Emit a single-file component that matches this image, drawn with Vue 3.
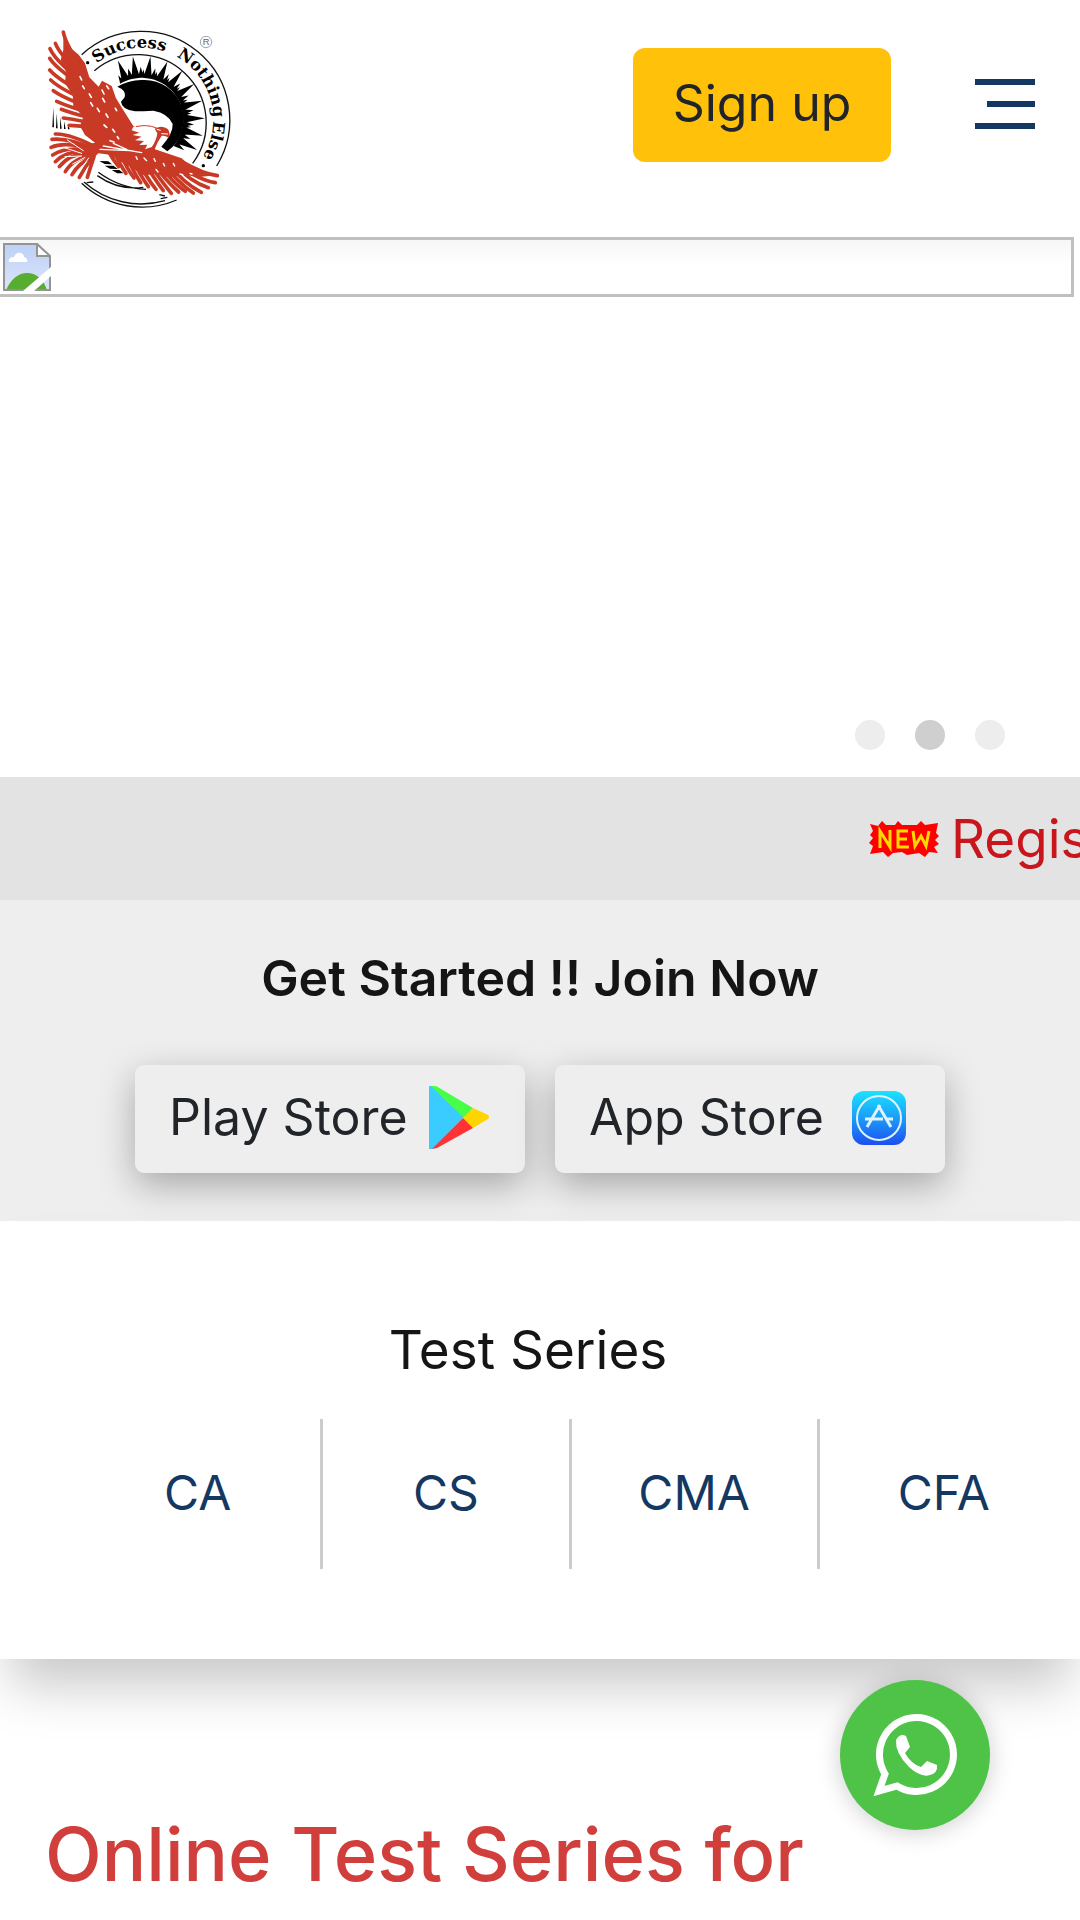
<script setup>
const series = ['CA', 'CS', 'CMA', 'CFA']

const point = (radius, degrees) => {
  const a = (degrees * Math.PI) / 180
  return `${(335 + radius * Math.cos(a)).toFixed(1)} ${(298 + radius * Math.sin(a)).toFixed(1)}`
}
const ray = (angle, tip, half) =>
  `M${point(125, angle - half)}L${point(tip, angle)}L${point(125, angle + half)}Z`
const rays = [-112, -98, -82, -66, -50, -34, -17, -1, 15, 29]
  .map((a) => ray(a, 190, 6) + ray(a + 7, 158, 4) + ray(a - 6, 150, 3))
  .join('')

const feathers = [
  // upper wing
  'M100 36Q106 72 165 160', 'M76 70Q92 110 175 185', 'M60 86Q80 130 180 200', 'M59 115Q85 155 190 215',
  'M59 150Q95 190 200 235', 'M62 180Q100 215 205 255', 'M70 212Q110 240 210 272', 'M80 244Q120 262 220 290',
  'M94 268Q130 282 225 305', 'M100 294Q150 300 235 322', 'M118 316Q165 316 240 335',
  // tail
  'M76 342Q120 340 205 385', 'M66 358Q115 352 200 390', 'M63 382Q110 362 196 392', 'M68 405Q115 375 192 395',
  'M76 425Q115 385 188 398', 'M88 440Q125 395 188 402', 'M106 455Q130 415 190 404', 'M126 464Q145 430 190 408',
  'M148 472Q165 440 190 410', 'M172 472Q182 440 192 410',
  // lower wing
  'M562 467Q520 462 455 425', 'M556 488Q500 480 440 425', 'M535 503Q480 485 425 425', 'M514 517Q460 490 410 425',
  'M490 519Q445 490 395 425', 'M466 514Q430 490 380 425', 'M446 516Q410 485 365 425', 'M424 520Q395 485 350 420',
  'M400 512Q375 480 335 415', 'M378 508Q350 475 318 410', 'M355 500Q330 465 300 405', 'M332 488Q310 455 285 400',
  'M312 474Q290 445 270 400', 'M288 460Q270 435 255 400', 'M266 440Q250 420 240 402'
]
</script>

<template>
  <div class="page">
    <header class="header">
      <a class="brand" href="#" aria-label="Home">
        <svg class="logo" viewBox="0 0 660 600" aria-hidden="true">
          <defs>
            <path id="motto" d="M120 298A215 215 0 0 1 550 298A215 215 0 0 1 335 513" />
          </defs>
          <g fill="none" stroke="#111" stroke-width="4">
            <path d="M155 104A265 265 0 0 1 560 438" />
            <path d="M193 152A204 204 0 0 1 488 430" />
            <path d="M155 490A265 265 0 0 0 440 540M162 486A258 258 0 0 0 405 542M205 457Q270 505 348 508M202 467Q265 512 340 502" />
            <path d="M170 488L190 486M388 524L405 528M392 536L412 532" />
          </g>
          <g class="motto">
            <text><textPath href="#motto" startOffset="192">Success</textPath></text>
            <text><textPath href="#motto" startOffset="446">Nothing</textPath></text>
            <text><textPath href="#motto" startOffset="680">Else</textPath></text>
          </g>
          <circle cx="173" cy="128" r="5" /><circle cx="520" cy="437" r="5" />
          <circle cx="528" cy="66" r="17" fill="none" stroke="#777" stroke-width="2" />
          <text class="mark" x="528" y="76" text-anchor="middle">R</text>
          <path :d="rays" />
          <path d="M262 200Q300 178 340 180A118 118 0 0 1 412 394L394 380Q430 340 428 312Q415 280 370 272Q340 274 315 274Q275 268 273 245L284 232Q290 210 262 200Z" />
          <path d="M70 262L67 322H72ZM80 280L78 325H83ZM91 292L90 326H95ZM102 304L102 327H107ZM113 312L114 328H119Z" />
          <path d="M208 423L235 424L246 433L224 432ZM224 437L250 437L264 447L240 446ZM245 450L268 450L280 460L262 460Z" />
          <g fill="none" stroke="#c83a25" stroke-width="11" stroke-linecap="round">
            <path v-for="d in feathers" :key="d" :d="d" />
          </g>
          <path fill="#c83a25" d="M100 32L115 78L146 104L165 130L178 172L206 200L216 182L245 198L258 235L283 275L310 318L340 330L375 388L455 415L470 428L520 455L566 465L500 472L460 462L420 474L380 462L340 466L300 440L270 424L240 404L205 400L185 420L160 408L140 392L150 378L195 368L165 345L150 318L160 290L130 258L128 225L105 190L108 155L92 120L100 90Z" />
          <path fill="#fff" d="M310 320L350 318Q380 312 400 325L385 350L368 380L345 388L352 374L328 375L342 363L315 361L335 350L308 345L328 338L305 331Z" />
          <path fill="#c83a25" d="M374 326Q398 314 414 328Q422 340 416 355Q410 346 395 347Q382 365 374 388L364 384Q380 360 382 340Z" />
          <path fill="none" stroke="#c83a25" stroke-width="3" d="M318 320Q350 312 380 324" />
          <path fill="none" stroke="#fff" stroke-width="3" d="M380 328L392 331M394 341L414 342" />
          <g fill="none" stroke="#fff" stroke-width="5" stroke-linecap="round">
            <path d="M150 170L155 180M158 198L163 206M178 222L184 232M182 248L188 258M202 265L208 275M216 210L222 222M218 235L224 246M228 282L234 292M222 315L230 322M248 328L254 336M256 265L260 272M230 198L236 206M262 350L266 356M240 362L252 366" />
            <path d="M210 388L300 392M220 378L335 398M250 370L290 388M342 414L350 422M372 416L376 424M400 430L404 438M430 430L434 438M378 448L384 456M450 462L458 464M480 460L486 462M318 410L322 418" stroke-width="4" />
            <path d="M112 360L160 392M100 382L155 400M105 410L155 408M128 432L165 412M155 444L176 414" stroke-width="3" />
          </g>
        </svg>
      </a>
      <div class="actions">
        <button class="signup" type="button">Sign up</button>
        <button class="menu" type="button" aria-label="Menu"><i></i><i></i><i></i></button>
      </div>
    </header>

    <section class="slider" aria-label="Banners">
      <div class="slide">
        <svg class="broken" viewBox="0 0 48 48" aria-hidden="true">
          <defs>
            <linearGradient id="sky" x2="0" y2="1"><stop stop-color="#bdd0f6" /><stop offset="1" stop-color="#dbe5fb" /></linearGradient>
          </defs>
          <path d="M1 1H34L47 14V47H1Z" fill="url(#sky)" />
          <path d="M3 47Q11 30 24 30Q38 30 44 47Z" fill="#56ad30" />
          <path d="M6 19Q5 14 11 14Q13 9 18 10Q21 11 21 14Q25 15 24 19Z" fill="#fff" />
          <path d="M1 1H34L47 14V47H1Z" fill="none" stroke="#949494" stroke-width="2" />
          <path d="M34 1V13H47Z" fill="#fff" stroke="#949494" stroke-width="2" />
          <path d="M20 48L48 24V33L31 48Z" fill="#fff" />
        </svg>
      </div>
      <div class="dots">
        <button type="button" aria-label="Slide 1"></button>
        <button type="button" class="active" aria-label="Slide 2"></button>
        <button type="button" aria-label="Slide 3"></button>
      </div>
    </section>

    <div class="ticker">
      <svg class="new" viewBox="0 0 70 36" role="img" aria-label="New">
        <path fill="#f00" d="M1 3L9 5L13 0L17 4L26 4L29 0L33 4H48L52 0L56 4L69 2L67 12L70 15L66 19L70 23L65 26L69 32L60 31L56 36L50 32L38 34L33 31L24 32L19 36L14 31L1 33L4 25L0 22L4 17L1 14L4 10Z" />
        <path fill="none" stroke="#ffd800" stroke-width="3" d="M11 27V10L21 26V9M39 10H29V26H40M29 18H38M44 10L46 25L52 15L57 25L60 10" />
      </svg>
      <span>Regis</span>
    </div>

    <section class="join">
      <h2>Get Started !! Join Now</h2>
      <div class="stores">
        <a href="#" class="store">
          Play Store
          <svg viewBox="0 0 60 63" aria-hidden="true">
            <path fill="#3bccff" d="M0 0H3L35 31L4 63H0Z" />
            <path fill="#48ff48" d="M2 0H7L44 22L35 32Z" />
            <path fill="#ffd400" d="M44 22L59 29Q61 31 59 33L44 42L34 32Z" />
            <path fill="#ff3333" d="M34 32L44 42L8 62L3 63Z" />
          </svg>
        </a>
        <a href="#" class="store">
          App Store
          <svg viewBox="0 0 60 63" aria-hidden="true">
            <defs>
              <linearGradient id="blue" x2="0" y2="1"><stop stop-color="#1ae3ff" /><stop offset="0.5" stop-color="#1d9cf8" /><stop offset="1" stop-color="#1c4ff0" /></linearGradient>
            </defs>
            <rect x="3" y="5" width="54" height="54" rx="12" fill="url(#blue)" />
            <g fill="none" stroke="#dff3ff" stroke-width="2">
              <circle cx="30" cy="32" r="22" />
              <path stroke-width="3" d="M18 41L31 19M29 19L42 41M16 33H34M38 33H44" />
            </g>
          </svg>
        </a>
      </div>
    </section>

    <section class="series">
      <h2>Test Series</h2>
      <ul>
        <li v-for="name in series" :key="name"><a href="#">{{ name }}</a></li>
      </ul>
    </section>

    <main class="intro">
      <h1>Online Test Series for</h1>
    </main>

    <a class="whatsapp" href="#" aria-label="WhatsApp">
      <svg viewBox="0 0 84 84" aria-hidden="true">
        <path fill="none" stroke="#fff" stroke-width="7" d="M6 78L12 61A37 37 0 1 1 24 73Z" />
        <path fill="#fff" d="M23 27Q27 20 33 23L37 34L32 40Q38 51 48 54L54 48L64 52Q65 60 57 62Q48 65 36 54Q22 40 23 27Z" />
      </svg>
    </a>
  </div>
</template>

<style>
body {
  margin: 0;
  background: #fff;
}
</style>

<style scoped>
.page {
  overflow: hidden;
  font-family: Inter, "Open Sans", sans-serif;
  font-size: 50px;
  line-height: 72px;
  color: #212529;
}
a {
  color: inherit;
  text-decoration: none;
}
h1, h2, ul {
  margin: 0;
  padding: 0;
}
button {
  border: 0;
  padding: 0;
  font: inherit;
  color: inherit;
}
.header {
  display: flex;
  justify-content: space-between;
  align-items: flex-start;
  padding: 20px 45px 17px 30px;
}
.brand {
  display: block;
}
.logo {
  display: block;
  width: 220px;
  height: 200px;
}
.motto {
  font: bold 49px "DejaVu Serif", serif;
}
.mark {
  font: 28px "Liberation Sans", sans-serif;
  fill: #666;
}
.actions {
  display: flex;
  align-items: center;
  gap: 84px;
  padding-top: 28px;
}
.signup {
  width: 258px;
  height: 114px;
  padding-bottom: 4px;
  border-radius: 12px;
  background: #ffc10a;
}
.menu {
  display: flex;
  flex-direction: column;
  align-items: flex-end;
  gap: 16px;
  width: 60px;
  padding-bottom: 2px;
  background: none;
}
.menu i {
  width: 100%;
  height: 6px;
  background: #143862;
}
.menu i:nth-child(2) {
  width: 48px;
}
.slider {
  display: flex;
  flex-direction: column;
  justify-content: space-between;
  height: 540px;
}
.slide {
  margin-right: 6px;
  padding: 3px;
  border: 3px solid #c0c0c0;
  border-left: 0;
  background: linear-gradient(#f6f6f6, #fff 24px);
}
.broken {
  display: block;
  width: 48px;
  height: 48px;
}
.dots {
  display: flex;
  justify-content: flex-end;
  gap: 30px;
  padding: 0 75px 27px;
}
.dots button {
  width: 30px;
  height: 30px;
  border-radius: 50%;
  background: #ededed;
}
.dots .active {
  background: #cfcfcf;
}
.ticker {
  display: flex;
  justify-content: flex-end;
  align-items: center;
  gap: 12px;
  height: 123px;
  overflow: hidden;
  white-space: nowrap;
  background: #e3e3e3;
  color: #c9161d;
  font-size: 53px;
}
.ticker span {
  flex: none;
  width: 129px;
}
.new {
  flex: none;
  width: 70px;
  height: 36px;
}
.join {
  padding: 42px 0 48px;
  background: #eee;
  text-align: center;
}
.join h2 {
  font-size: 50px;
  font-weight: 600;
  color: #151515;
}
.stores {
  display: flex;
  justify-content: center;
  gap: 30px;
  margin-top: 51px;
}
.store {
  display: flex;
  justify-content: space-between;
  align-items: center;
  box-sizing: border-box;
  width: 390px;
  height: 108px;
  padding: 0 36px 4px 34px;
  border-radius: 9px;
  background: #eee;
  box-shadow: 0 12px 36px rgba(0, 0, 0, 0.3);
}
.store svg {
  width: 60px;
  height: 63px;
}
.series {
  padding: 90px 12px 90px 75px;
  background: #fff;
  box-shadow: 0 36px 50px -10px rgba(0, 0, 0, 0.22);
}
.series h2 {
  padding: 3px 87px 33px 0;
  font-size: 53px;
  font-weight: 400;
  text-align: center;
  color: #151515;
}
.series ul {
  display: grid;
  grid-template-columns: repeat(4, 1fr);
  list-style: none;
}
.series li {
  height: 150px;
  font-size: 48px;
  line-height: 148px;
  text-align: center;
  color: #143862;
}
.series li:not(:last-child) {
  border-right: 3px solid #ccc;
}
.intro {
  padding: 141px 45px 0;
}
.intro h1 {
  font-size: 74px;
  font-weight: 500;
  line-height: 108px;
  color: #d03f3c;
}
.whatsapp {
  position: fixed;
  right: 90px;
  bottom: 90px;
  display: grid;
  place-items: center;
  width: 150px;
  height: 150px;
  border-radius: 50%;
  background: #4fc248;
  box-shadow: 0 2px 24px rgba(0, 0, 0, 0.2);
}
.whatsapp svg {
  width: 84px;
  height: 84px;
}
</style>
